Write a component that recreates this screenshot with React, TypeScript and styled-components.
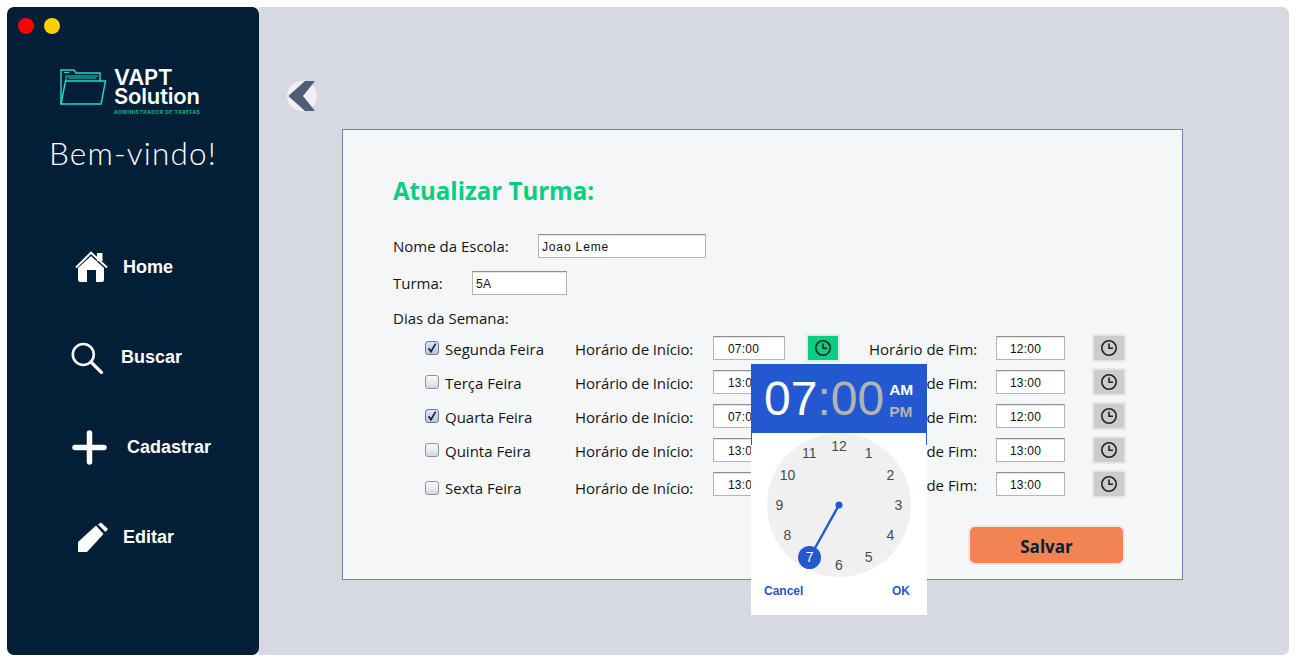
import React from "react";
import styled, { createGlobalStyle } from "styled-components";

const Global = createGlobalStyle`
  html, body { margin: 0; padding: 0; background: #fff; overflow: hidden; }
  * { box-sizing: border-box; }
`;

const Page = styled.div`
  display: flex;
  width: 1296px;
  height: 661px;
  padding: 7px 7px 6px;
`;

const Sidebar = styled.aside`
  width: 252px;
  background: #021f37;
  border-radius: 7px;
  display: flex;
  flex-direction: column;
  color: #fff;
`;

const Dots = styled.div`
  display: flex;
  gap: 10px;
  padding: 11px 0 0 11px;
`;

const Dot = styled.span<{ $color: string }>`
  width: 16px;
  height: 16px;
  border-radius: 50%;
  background: ${(p) => p.$color};
`;

const Brand = styled.div`
  display: flex;
  gap: 7px;
  padding: 34px 0 0 53px;
`;

const LogoIcon = styled.svg`
  width: 47px;
  height: 38px;
  flex: none;
`;

const BrandText = styled.div`
  display: flex;
  flex-direction: column;
  width: 90px;
`;

const BrandName = styled.div`
  font: 600 22px/19px Inter, "Liberation Sans", sans-serif;
  letter-spacing: -0.2px;
  color: #fdfdfd;
`;

const BrandTag = styled.div`
  font: 700 5px/7px Inter, "Liberation Sans", sans-serif;
  letter-spacing: 0.5px;
  color: #0bb585;
  white-space: nowrap;
  padding-top: 3px;
`;

const Welcome = styled.div`
  font: 300 31.5px/40px Lato, sans-serif;
  letter-spacing: 1.2px;
  text-align: center;
  padding: 17px 0 0;
  color: #fff;
`;

const Nav = styled.nav`
  display: flex;
  flex-direction: column;
  padding-top: 49px;
`;

const NavItem = styled.div<{ $left: number; $gap: number; $w: number }>`
  height: 90px;
  display: flex;
  align-items: center;
  padding-left: ${(p) => p.$left}px;
  gap: ${(p) => p.$gap}px;
  font: 700 18px/22px "Liberation Sans", Arial, sans-serif;
  color: #fff;
  svg { width: ${(p) => p.$w}px; height: ${(p) => p.$w}px; flex: none; }
`;

const Main = styled.main`
  flex: 1;
  background: #d6d9e2;
  border-radius: 0 7px 7px 0;
  padding: 73px 0 0 28px;
`;

const Back = styled.svg`
  display: block;
  width: 32px;
  height: 32px;
`;

const Panel = styled.section`
  position: relative;
  width: 841px;
  height: 451px;
  margin: 17px 0 0 55px;
  background: #f5f6f8;
  border: 1px solid #6e83ae;
  padding: 46px 0 0 50px;
  font: 400 15px/20px "Open Sans", "Noto Sans", sans-serif;
  color: #161616;
`;

const Title = styled.h1`
  margin: 0;
  font: 700 24.05px/30px "Open Sans", sans-serif;
  color: #06cf81;
`;

const FieldRow = styled.div<{ $gap: number; $top: number }>`
  display: flex;
  align-items: center;
  height: 24px;
  margin-top: ${(p) => p.$top}px;
  gap: ${(p) => p.$gap}px;
`;

const FieldLabel = styled.span<{ $w: number }>`
  width: ${(p) => p.$w}px;
  white-space: nowrap;
`;

const TextBox = styled.input<{ $w: number; $pad: number; $ls: number }>`
  width: ${(p) => p.$w}px;
  height: 24px;
  padding: 2px 0 0 ${(p) => p.$pad}px;
  background: #fff;
  border: 1px solid #b4b4b4;
  border-top-color: #8f8f8f;
  box-shadow: inset 0 1px 0 #e4e4e4;
  font: 400 12px/16px "Liberation Sans", Arial, sans-serif;
  letter-spacing: ${(p) => p.$ls}px;
  color: #111;
  outline: none;
  border-radius: 0;
`;

const DaysHeading = styled.div`
  margin-top: 13px;
  height: 20px;
`;

const DayList = styled.div`
  display: flex;
  flex-direction: column;
  gap: 10px;
  padding: 8px 0 0 32px;
`;

const DayRow = styled.div`
  display: grid;
  grid-template-columns: 20px 130px 138px 72px 55px 156px 69px 61px;
  align-items: center;
  height: 24px;
`;

const CheckCell = styled.span<{ $drop: boolean }>`
  display: flex;
  align-items: center;
  height: 24px;
  padding-top: ${(p) => (p.$drop ? 8 : 0)}px;
`;

const Check = styled.span<{ $on: boolean }>`
  width: 14px;
  height: 14px;
  border-radius: 3px;
  border: 1px solid ${(p) => (p.$on ? "#6d7a91" : "#8e929b")};
  background: ${(p) =>
    p.$on
      ? "linear-gradient(#dbe5f4, #b7c8e2)"
      : "linear-gradient(#fbfbfd, #d5d9e2)"};
  display: flex;
  align-items: center;
  justify-content: center;
  svg { width: 12px; height: 12px; }
`;

const DayText = styled.span<{ $drop?: boolean }>`
  line-height: 16px;
  padding-top: ${(p) => (p.$drop ? 8 : 2)}px;
  white-space: nowrap;
`;

const StartLabel = styled(DayText)`
  letter-spacing: -0.1px;
`;

const EndLabel = styled.span`
  line-height: 16px;
  padding: 2px 0 0 29px;
  white-space: nowrap;
`;

const ClockCell = styled.div<{ $pad: number }>`
  padding-left: ${(p) => p.$pad}px;
`;

const ClockBtn = styled.button<{ $active?: boolean }>`
  width: 34px;
  height: 28px;
  padding: 0;
  margin: -2px 0;
  border: 2px solid #e6e7eb;
  background: ${(p) => (p.$active ? "#06cf81" : "#cccccc")};
  display: flex;
  align-items: center;
  justify-content: center;
  svg { width: 18px; height: 18px; }
`;

const Footer = styled.div`
  display: flex;
  padding: 29px 0 0 575px;
`;

const SaveBtn = styled.button`
  width: 157px;
  height: 40px;
  border: 2px solid #e8e9ed;
  border-radius: 7px;
  background: #f28352;
  font: 700 17px/20px "Open Sans", sans-serif;
  color: #03203a;
  padding: 3px 0 0;
`;

const Popup = styled.div`
  position: absolute;
  left: 408px;
  top: 234px;
  width: 176px;
  height: 251px;
  background: #fff;
  display: flex;
  flex-direction: column;
  &::before, &::after {
    content: "";
    position: absolute;
    top: 69px;
    width: 1px;
    height: 12px;
    background: #2458d0;
  }
  &::before { left: 0; }
  &::after { right: 0; }
`;

const PopHead = styled.div`
  height: 69px;
  background: #2458d0;
  display: flex;
  align-items: center;
  padding-left: 13px;
  font-family: "Liberation Sans", Arial, sans-serif;
`;

const BigTime = styled.span<{ $dim?: boolean }>`
  font-size: 48px;
  line-height: 60px;
  color: ${(p) => (p.$dim ? "#b3b3b3" : "#fff")};
`;

const Meridiem = styled.div`
  display: flex;
  flex-direction: column;
  gap: 4px;
  padding: 4px 0 0 5px;
`;

const MerItem = styled.span<{ $dim?: boolean }>`
  font: 700 15.5px/18px "Liberation Sans", Arial, sans-serif;
  color: ${(p) => (p.$dim ? "#b3b3b3" : "#fff")};
`;

const Dial = styled.div`
  position: relative;
  width: 144px;
  height: 144px;
  margin: 0 0 0 16px;
  border-radius: 50%;
  background: #f0f0f0;
`;

const Hand = styled.svg`
  position: absolute;
  inset: 0;
  width: 144px;
  height: 144px;
`;

const Num = styled.span<{ $sel: boolean }>`
  position: absolute;
  width: ${(p) => (p.$sel ? 23 : 22)}px;
  height: ${(p) => (p.$sel ? 23 : 22)}px;
  margin: -11px 0 0 -11px;
  border-radius: 50%;
  display: flex;
  align-items: center;
  justify-content: center;
  font: 400 14px/16px "Liberation Sans", Arial, sans-serif;
  color: ${(p) => (p.$sel ? "#fff" : "#4a4a4a")};
  background: ${(p) => (p.$sel ? "#2458d0" : "transparent")};
`;

const PopFoot = styled.div`
  display: flex;
  justify-content: space-between;
  padding: 6px 17px 0 13px;
  font: 700 12px/16px "Liberation Sans", Arial, sans-serif;
  color: #2458d0;
`;

const ClockIcon = () => (
  <svg viewBox="0 0 18 18" fill="none" stroke="#222" strokeWidth="1.6">
    <circle cx="9" cy="9" r="7.2" />
    <path d="M9 4.6V9.2H13" />
  </svg>
);

const CheckMark = () => (
  <svg viewBox="0 0 12 12" fill="none" stroke="#1c2330" strokeWidth="1.7">
    <path d="M2.6 6.2 5 9.6 9.6 1.6" />
  </svg>
);

const days = [
  { name: "Segunda Feira", on: true, start: "07:00", end: "12:00", active: true },
  { name: "Terça Feira", on: false, start: "13:00", end: "13:00" },
  { name: "Quarta Feira", on: true, start: "07:00", end: "12:00" },
  { name: "Quinta Feira", on: false, start: "13:00", end: "13:00" },
  { name: "Sexta Feira", on: false, start: "13:00", end: "13:00", drop: true },
];

const hours = [12, 1, 2, 3, 4, 5, 6, 7, 8, 9, 10, 11];

export default function App() {
  return (
    <Page>
      <Global />
      <Sidebar>
        <Dots>
          <Dot $color="#ff0000" />
          <Dot $color="#ffd000" />
        </Dots>
        <Brand>
          <LogoIcon viewBox="0 0 47 38" fill="none" stroke="#17e0cc" strokeWidth="1.4">
            <path d="M1 36V2H14L16 5H40V13" />
            <path d="M6 13V8H38M8 10H36" strokeWidth="1" />
            <path d="M1 36 5.5 13H45.5L41 36Z" />
            <path d="M4 4.5H9" strokeWidth="1" />
          </LogoIcon>
          <BrandText>
            <BrandName>VAPT</BrandName>
            <BrandName>Solution</BrandName>
            <BrandTag>ADMINISTRADOR DE TAREFAS</BrandTag>
          </BrandText>
        </Brand>
        <Welcome>Bem-vindo!</Welcome>
        <Nav>
          <NavItem $left={68} $gap={15} $w={33}>
            <svg viewBox="0 0 33 33" fill="#fff">
              <path d="M1 16.5 16 1.7 32 16.5" fill="none" stroke="#fff" strokeWidth="2" />
              <path d="M22 2H27.5V10H22Z" />
              <path d="M3 17 16 5 29 17V29Q29 31 27 31H21V19H12V31H5Q3 31 3 29Z" />
            </svg>
            Home
          </NavItem>
          <NavItem $left={64} $gap={17} $w={33}>
            <svg viewBox="0 0 33 33" fill="none" stroke="#f4f4f4" strokeWidth="2.6" strokeLinecap="round">
              <circle cx="12.3" cy="13.5" r="10.5" />
              <path d="M20 21 30.5 31.5" strokeWidth="3.2" />
            </svg>
            Buscar
          </NavItem>
          <NavItem $left={65} $gap={20} $w={35}>
            <svg viewBox="0 0 35 35" fill="none" stroke="#fff" strokeWidth="5.5" strokeLinecap="round">
              <path d="M17.5 3V32M3 17.5H32" />
            </svg>
            Cadastrar
          </NavItem>
          <NavItem $left={71} $gap={15} $w={30}>
            <svg viewBox="0 0 30 30" fill="#fff">
              <path d="M0 30V20L18 3.5 25.5 12 9 30Z" />
              <path d="M20 2.5 23 0.5 30 7 27.5 10Z" />
            </svg>
            Editar
          </NavItem>
        </Nav>
      </Sidebar>
      <Main>
        <Back viewBox="0 0 32 32">
          <circle cx="15" cy="16" r="15" fill="#f0f0f2" />
          <path d="M1.3 16 18 1H28L16 16 28 31H18Z" fill="#4f5d7a" />
        </Back>
        <Panel>
          <Title>Atualizar Turma:</Title>
          <FieldRow $gap={30} $top={28}>
            <FieldLabel $w={115}>Nome da Escola:</FieldLabel>
            <TextBox $w={168} $pad={3} $ls={0.85} readOnly defaultValue="Joao Leme" />
          </FieldRow>
          <FieldRow $gap={29} $top={13}>
            <FieldLabel $w={50}>Turma:</FieldLabel>
            <TextBox $w={95} $pad={3} $ls={0.4} readOnly defaultValue="5A" />
          </FieldRow>
          <DaysHeading>Dias da Semana:</DaysHeading>
          <DayList>
            {days.map((d) => (
              <DayRow key={d.name}>
                <CheckCell $drop={!!d.drop}>
                  <Check $on={d.on}>{d.on && <CheckMark />}</Check>
                </CheckCell>
                <DayText $drop={d.drop}>{d.name}</DayText>
                <StartLabel $drop={d.drop}>Horário de Início:</StartLabel>
                <TextBox $w={72} $pad={14} $ls={0.2} readOnly defaultValue={d.start} />
                <ClockCell $pad={21}>
                  <ClockBtn $active={d.active}>{d.active && <ClockIcon />}</ClockBtn>
                </ClockCell>
                <EndLabel>Horário de Fim:</EndLabel>
                <TextBox $w={69} $pad={13} $ls={0.2} readOnly defaultValue={d.end} />
                <ClockCell $pad={27}>
                  <ClockBtn>
                    <ClockIcon />
                  </ClockBtn>
                </ClockCell>
              </DayRow>
            ))}
          </DayList>
          <Footer>
            <SaveBtn>Salvar</SaveBtn>
          </Footer>
          <Popup>
            <PopHead>
              <BigTime>07</BigTime>
              <BigTime $dim>:00</BigTime>
              <Meridiem>
                <MerItem>AM</MerItem>
                <MerItem $dim>PM</MerItem>
              </Meridiem>
            </PopHead>
            <Dial>
              <Hand viewBox="0 0 144 144">
                <path d="M72 72 43 124" stroke="#2458d0" strokeWidth="2.4" />
                <circle cx="72" cy="72" r="3.5" fill="#2458d0" />
              </Hand>
              {hours.map((h) => {
                const a = (h * Math.PI) / 6;
                return (
                  <Num
                    key={h}
                    $sel={h === 7}
                    style={{ left: 72 + 59.5 * Math.sin(a), top: 72 - 59.5 * Math.cos(a) }}
                  >
                    {h}
                  </Num>
                );
              })}
            </Dial>
            <PopFoot>
              <span>Cancel</span>
              <span>OK</span>
            </PopFoot>
          </Popup>
        </Panel>
      </Main>
    </Page>
  );
}
